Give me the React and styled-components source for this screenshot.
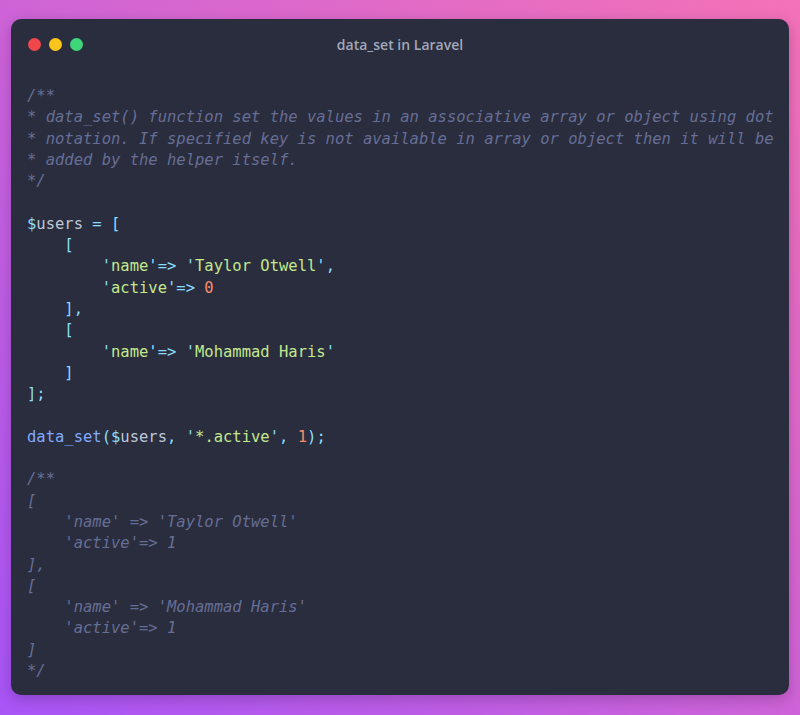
import React from "react";
import styled, { createGlobalStyle } from "styled-components";

const colors = {
  bg: "#292d3e",
  comment: "#676e95",
  text: "#bfc7d5",
  punct: "#89ddff",
  string: "#c3e88d",
  number: "#f78c6c",
  fn: "#82aaff",
};

const GlobalStyle = createGlobalStyle`
  html, body {
    margin: 0;
    padding: 0;
  }
  body {
    background: linear-gradient(to top right, #a855f7, #f472b6);
    min-height: 715px;
  }
`;

const Page = styled.div`
  box-sizing: border-box;
  width: 800px;
  height: 715px;
  padding: 19px 11px 20px;
  background: linear-gradient(to top right, #a855f7, #f472b6);
`;

const Window = styled.div`
  height: 100%;
  background: ${colors.bg};
  border-radius: 10px;
  box-shadow: 0 4px 14px rgba(40, 10, 60, 0.25);
  display: flex;
  flex-direction: column;
`;

const TitleBar = styled.div`
  height: 50px;
  padding: 0 16px;
  display: grid;
  grid-template-columns: 1fr auto 1fr;
  align-items: center;
`;

const Dots = styled.div`
  display: flex;
  gap: 8px;
  padding-left: 1px;
`;

const Dot = styled.span`
  width: 13px;
  height: 13px;
  border-radius: 50%;
  background: ${p => p.color};
`;

const Title = styled.div`
  font-family: "Open Sans", "Noto Sans", sans-serif;
  font-weight: 600;
  font-size: 14px;
  color: #a3a7bb;
`;

const Code = styled.pre`
  margin: 0;
  padding: 17px 16px 0;
  font-family: "DejaVu Sans Mono", "Liberation Mono", monospace;
  font-size: 15.5px;
  line-height: 21.3px;
  color: ${colors.text};
  white-space: pre;
`;

const Tok = styled.span`
  color: ${p => colors[p.$k] || colors.text};
  font-style: ${p => (p.$k === "comment" ? "italic" : "normal")};
`;

const C = ({ children }) => <Tok $k="comment">{children}</Tok>;
const P = ({ children }) => <Tok $k="punct">{children}</Tok>;
const S = ({ children }) => (
  <>
    <P>'</P>
    <Tok $k="string">{children}</Tok>
    <P>'</P>
  </>
);
const N = ({ children }) => <Tok $k="number">{children}</Tok>;
const F = ({ children }) => <Tok $k="fn">{children}</Tok>;
const V = ({ name }) => (
  <>
    <P>$</P>
    <Tok $k="text">{name}</Tok>
  </>
);

export default function App() {
  return (
    <>
      <GlobalStyle />
      <Page>
        <Window>
          <TitleBar>
            <Dots>
              <Dot color="#f0474a" />
              <Dot color="#f9c51d" />
              <Dot color="#3fd67b" />
            </Dots>
            <Title>data_set in Laravel</Title>
            <span />
          </TitleBar>
          <Code>
            <C>{`/**
* data_set() function set the values in an associative array or object using dot
* notation. If specified key is not available in array or object then it will be
* added by the helper itself.
*/`}</C>
            {"\n\n"}
            <V name="users" /> <P>=</P> <P>[</P>
            {"\n    "}
            <P>[</P>
            {"\n        "}
            <S>name</S>
            <P>=&gt;</P> <S>Taylor Otwell</S>
            <P>,</P>
            {"\n        "}
            <S>active</S>
            <P>=&gt;</P> <N>0</N>
            {"\n    "}
            <P>],</P>
            {"\n    "}
            <P>[</P>
            {"\n        "}
            <S>name</S>
            <P>=&gt;</P> <S>Mohammad Haris</S>
            {"\n    "}
            <P>]</P>
            {"\n"}
            <P>];</P>
            {"\n\n"}
            <F>data_set</F>
            <P>(</P>
            <V name="users" />
            <P>,</P> <S>*.active</S>
            <P>,</P> <N>1</N>
            <P>);</P>
            {"\n\n"}
            <C>{`/**
[
    'name' => 'Taylor Otwell'
    'active'=> 1
],
[
    'name' => 'Mohammad Haris'
    'active'=> 1
]
*/`}</C>
          </Code>
        </Window>
      </Page>
    </>
  );
}
